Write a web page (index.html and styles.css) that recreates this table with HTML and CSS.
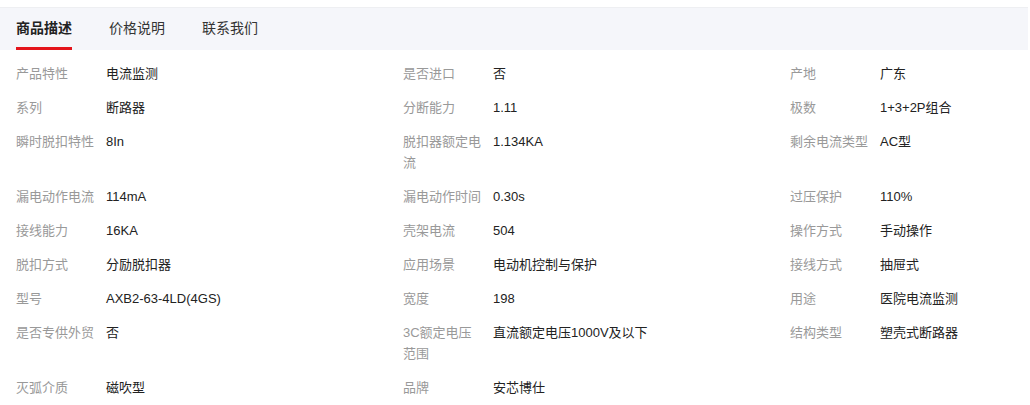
FILE: index.html
```html
<!DOCTYPE html>
<html lang="zh-CN">
<head>
    <meta charset="UTF-8">
    <meta name="viewport" content="width=device-width, initial-scale=1.0">
    <title>商品描述</title>
    <link rel="stylesheet" href="styles.css">
</head>
<body>
    <div class="tabs">
        <div class="tab active">商品描述</div>
        <div class="tab">价格说明</div>
        <div class="tab">联系我们</div>
    </div>

    <div class="attrs">
        <div class="attr"><span class="label">产品特性</span><span class="value">电流监测</span></div>
        <div class="attr"><span class="label">是否进口</span><span class="value">否</span></div>
        <div class="attr"><span class="label">产地</span><span class="value">广东</span></div>

        <div class="attr"><span class="label">系列</span><span class="value">断路器</span></div>
        <div class="attr"><span class="label">分断能力</span><span class="value">1.11</span></div>
        <div class="attr"><span class="label">极数</span><span class="value">1+3+2P组合</span></div>

        <div class="attr"><span class="label">瞬时脱扣特性</span><span class="value">8In</span></div>
        <div class="attr"><span class="label">脱扣器额定电流</span><span class="value">1.134KA</span></div>
        <div class="attr"><span class="label">剩余电流类型</span><span class="value">AC型</span></div>

        <div class="attr"><span class="label">漏电动作电流</span><span class="value">114mA</span></div>
        <div class="attr"><span class="label">漏电动作时间</span><span class="value">0.30s</span></div>
        <div class="attr"><span class="label">过压保护</span><span class="value">110%</span></div>

        <div class="attr"><span class="label">接线能力</span><span class="value">16KA</span></div>
        <div class="attr"><span class="label">壳架电流</span><span class="value">504</span></div>
        <div class="attr"><span class="label">操作方式</span><span class="value">手动操作</span></div>

        <div class="attr"><span class="label">脱扣方式</span><span class="value">分励脱扣器</span></div>
        <div class="attr"><span class="label">应用场景</span><span class="value">电动机控制与保护</span></div>
        <div class="attr"><span class="label">接线方式</span><span class="value">抽屉式</span></div>

        <div class="attr"><span class="label">型号</span><span class="value">AXB2-63-4LD(4GS)</span></div>
        <div class="attr"><span class="label">宽度</span><span class="value">198</span></div>
        <div class="attr"><span class="label">用途</span><span class="value">医院电流监测</span></div>

        <div class="attr"><span class="label">是否专供外贸</span><span class="value">否</span></div>
        <div class="attr"><span class="label">3C额定电压范围</span><span class="value">直流额定电压1000V及以下</span></div>
        <div class="attr"><span class="label">结构类型</span><span class="value">塑壳式断路器</span></div>

        <div class="attr"><span class="label">灭弧介质</span><span class="value">磁吹型</span></div>
        <div class="attr"><span class="label">品牌</span><span class="value">安芯博仕</span></div>
    </div>
</body>
</html>
```

FILE: styles.css
```css
body {
    margin: 0;
    font-family: "Liberation Sans", "Noto Sans CJK SC", sans-serif;
    background-color: #fff;
    color: #333;
}
.tabs {
    display: flex;
    gap: 37px;
    margin: 7px 2px 0 0;
    padding: 0 16px;
    height: 43px;
    background-color: #f5f6fa;
    border-top: 1px solid #eeeff2;
    box-sizing: border-box;
}
.tab {
    font-size: 14px;
    line-height: 40px;
    color: #333;
    border-bottom: 3px solid transparent;
}
.tab.active {
    font-weight: bold;
    color: #222;
    border-bottom-color: #e4141b;
}
.attrs {
    display: grid;
    grid-template-columns: 387px 387px 1fr;
    padding: 6px 16px 0;
}
.attr {
    display: flex;
    padding: 7px 0 6px;
    font-size: 13px;
    line-height: 21px;
}
.label {
    flex: none;
    width: 80px;
    margin-right: 10px;
    color: #999;
}
.value {
    color: #222;
}
```
